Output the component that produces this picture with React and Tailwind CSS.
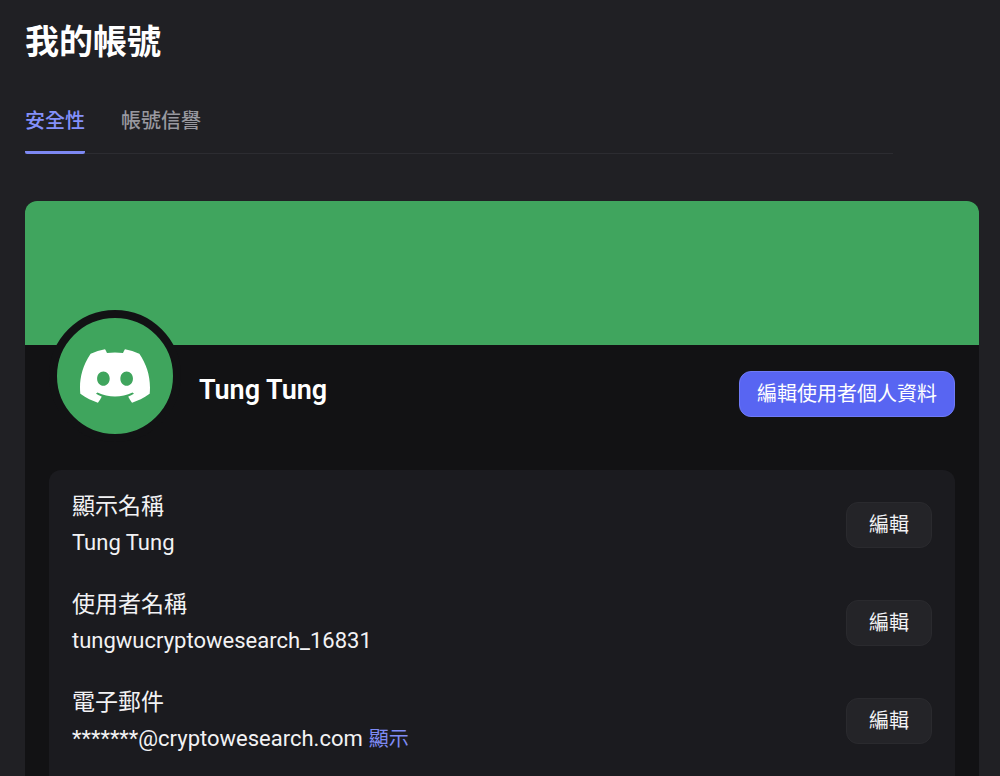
import { SiDiscord } from "react-icons/si";

const fields = [
  { id: "display-name", label: "顯示名稱", value: "Tung Tung" },
  { id: "username", label: "使用者名稱", value: "tungwucryptowesearch_16831" },
  { id: "email", label: "電子郵件", value: "*******@cryptowesearch.com", masked: true },
];

function Tabs() {
  return (
    <div role="tablist" className="mr-[86px] flex gap-9 border-b border-[#2c2c31]">
      <button
        role="tab"
        aria-selected="true"
        className="-mb-px flex h-[54px] items-start rounded-b-xs border-b-3 border-[#7d88f3] pt-[7px] text-xl leading-7 font-medium text-[#8490fa]"
      >
        安全性
      </button>
      <button
        role="tab"
        aria-selected="false"
        className="flex items-start pt-[7px] text-xl leading-7 font-medium text-[#98989f]"
      >
        帳號信譽
      </button>
    </div>
  );
}

function Field({ field }) {
  return (
    <div className="flex items-center justify-between gap-4">
      <div>
        <h3 id={field.id} className="text-[23px] leading-9 font-normal">
          {field.label}
        </h3>
        <div className="text-[22px] leading-9">
          {field.value}
          {field.masked && (
            <button className="ml-[6px] text-xl leading-7 text-[#7f8bf5]">顯示</button>
          )}
        </div>
      </div>
      <button
        aria-describedby={field.id}
        className="h-[46px] shrink-0 rounded-xl border border-[#2a2a2e] bg-[#242428] px-[22px] text-xl leading-7"
      >
        編輯
      </button>
    </div>
  );
}

export default function App() {
  return (
    <main className="min-h-screen bg-[#202024] pt-5 pr-[21px] pl-[25px] font-['Roboto','Noto_Sans_CJK_TC',sans-serif] text-[#f2f2f4]">
      <h1 className="text-[34px] leading-11 font-bold text-white">我的帳號</h1>
      <div className="pt-9">
        <Tabs />
      </div>
      <section className="mt-[47px] overflow-hidden rounded-t-xl bg-[#121214]">
        <div className="h-36 bg-[#40a55e]" />
        <div className="flex items-start px-6">
          <div className="-mt-[35px] flex size-[132px] shrink-0 items-center justify-center rounded-full border-8 border-[#121214] bg-[#3fa55d]">
            <SiDiscord className="size-[70px] text-white" />
          </div>
          <div className="flex grow items-start justify-between gap-4 pt-[26px] pl-[18px]">
            <h2 className="text-[27px] leading-[38px] font-semibold text-white">Tung Tung</h2>
            <button className="h-[46px] rounded-xl border border-[#6f7af6] bg-[#5865f2] px-[17px] text-xl leading-7 text-white">
              編輯使用者個人資料
            </button>
          </div>
        </div>
        <div className="mx-6 mt-7 flex flex-col gap-[26px] rounded-t-xl bg-[#1b1b1f] px-[23px] pt-[19px] pb-6">
          {fields.map((field) => (
            <Field key={field.id} field={field} />
          ))}
        </div>
      </section>
    </main>
  );
}
